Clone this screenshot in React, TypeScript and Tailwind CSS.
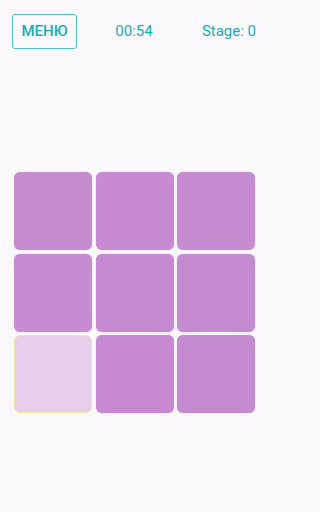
import React from 'react';

const tiles = [
  'bg-[#c58ccf]',
  'bg-[#c78ad3]',
  'bg-[#c68bd1]',
  'bg-[#c68bd0]',
  'bg-[#c68ad2]',
  'bg-[#c58bd0]',
  'light',
  'bg-[#c689d2]',
  'bg-[#c58bd0]',
];

const App: React.FC = () => {
  return (
    <div className="min-h-screen w-full bg-[#faf8fb]">
      <div className="w-[269px] h-[512px] font-['Roboto',sans-serif] overflow-hidden">
        <div className="flex items-center px-3 pt-[14px]">
          <div className="flex-1">
            <button className="w-[65px] h-[35px] border border-[#4cc0c8] rounded-[3px] text-[#16aebb] text-[15px] font-medium leading-none">
              МЕНЮ
            </button>
          </div>
          <div className="text-[#16aebb] text-[15px] leading-none">00:54</div>
          <div className="flex-1 flex justify-end pr-px text-[#16aebb] text-[15px] leading-none">
            Stage: 0
          </div>
        </div>

        <div className="grid grid-cols-3 gap-[3.5px] w-[241px] ml-[14px] mt-[123px]">
          {tiles.map((tile, index) =>
            tile === 'light' ? (
              <div
                key={index}
                className="h-[78px] rounded-[6px] bg-[#e6cfeb] border border-[#efe7a0]"
              />
            ) : (
              <div
                key={index}
                className={`h-[78px] rounded-[6px] ${tile} shadow-[0_0_1px_rgba(120,60,130,0.4)]`}
              />
            )
          )}
        </div>
      </div>
    </div>
  );
};

export default App;
